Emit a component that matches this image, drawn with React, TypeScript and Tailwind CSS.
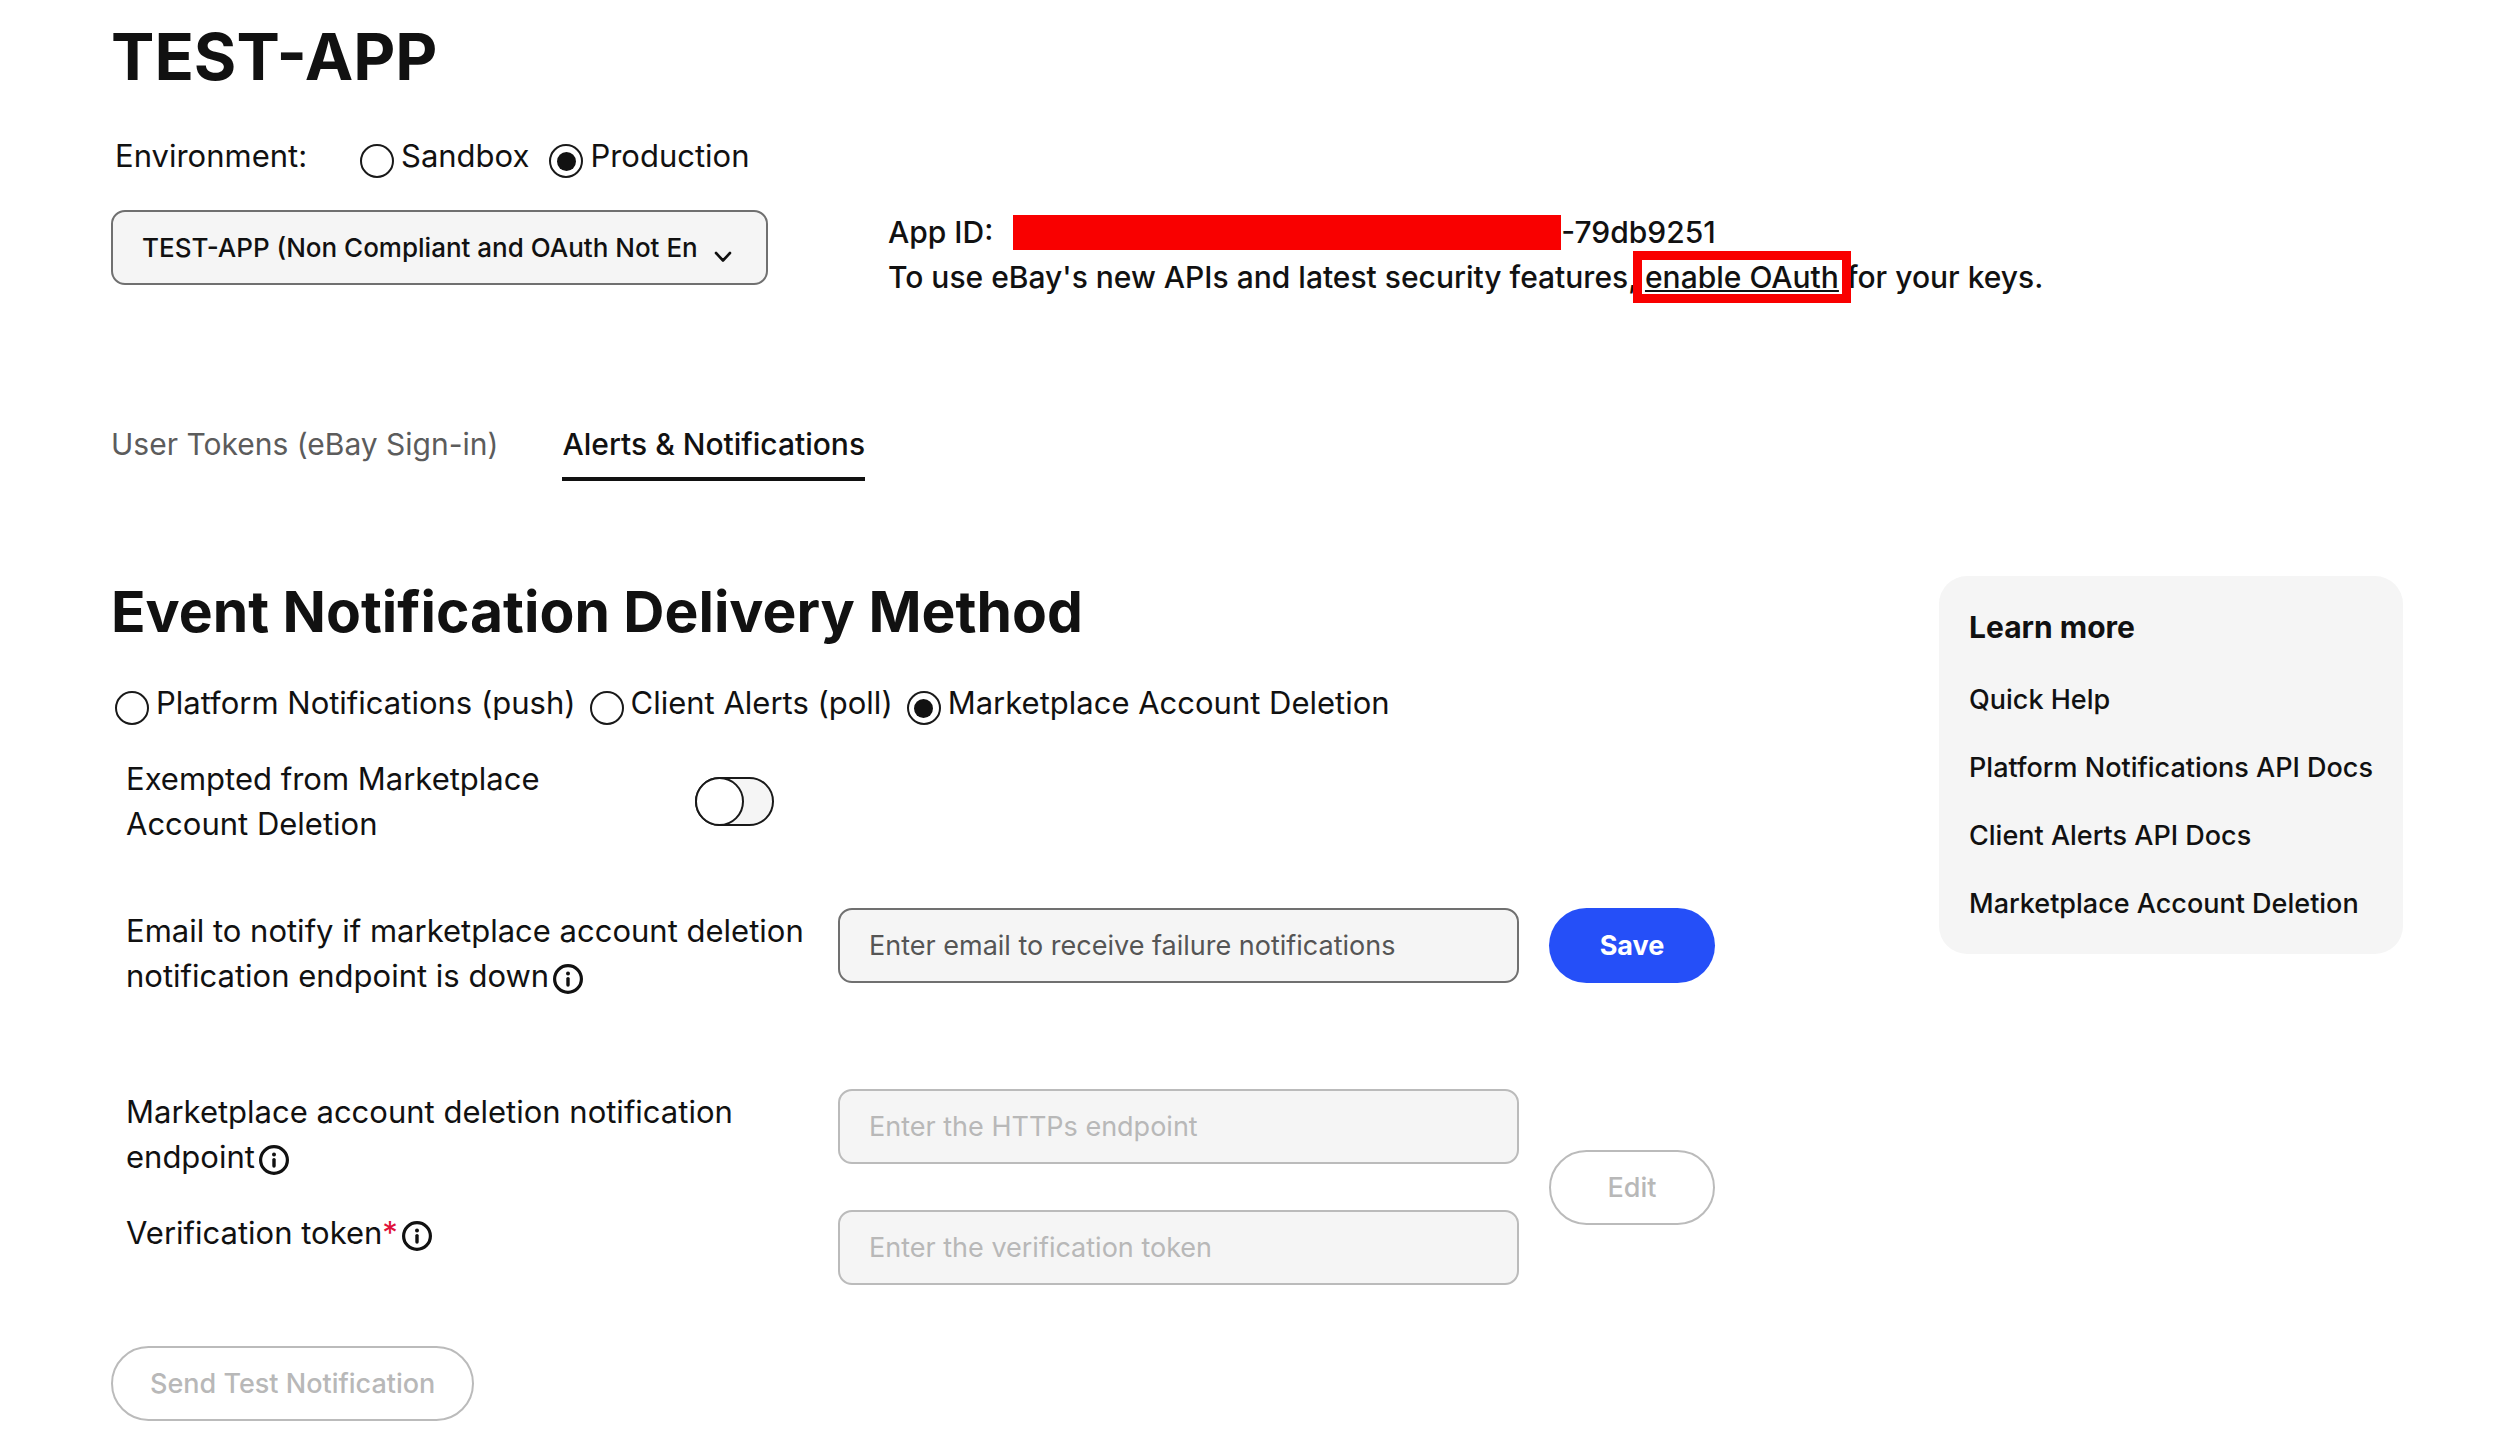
import { useState } from 'react';
import type { ReactNode } from 'react';
import { clsx } from 'clsx';

type Environment = 'sandbox' | 'production';
type DeliveryMethod = 'push' | 'poll' | 'deletion';

const TABS = ['User Tokens (eBay Sign-in)', 'Alerts & Notifications'];

const METHODS: { id: DeliveryMethod; label: string }[] = [
  { id: 'push', label: 'Platform Notifications (push)' },
  { id: 'poll', label: 'Client Alerts (poll)' },
  { id: 'deletion', label: 'Marketplace Account Deletion' },
];

const LINKS = [
  'Quick Help',
  'Platform Notifications API Docs',
  'Client Alerts API Docs',
  'Marketplace Account Deletion',
];

interface RadioProps {
  name: string;
  label: string;
  checked: boolean;
  onChange: () => void;
}

function Radio({ name, label, checked, onChange }: RadioProps) {
  return (
    <label className="flex items-end gap-[7px] whitespace-nowrap">
      <input
        type="radio"
        name={name}
        checked={checked}
        onChange={onChange}
        className="grid size-[34px] shrink-0 appearance-none place-content-center rounded-full border-2 border-[#191919] before:size-[19px] before:rounded-full checked:before:bg-[#111]"
      />
      {label}
    </label>
  );
}

function InfoButton({ label }: { label: string }) {
  return (
    <button type="button" aria-label={label} className="ml-1 inline-block align-middle">
      <svg width="30" height="30" viewBox="0 0 30 30" fill="none">
        <circle cx="15" cy="15" r="13.4" stroke="#111" strokeWidth="3.2" />
        <circle cx="15" cy="9.4" r="2" fill="#111" />
        <path d="M15 14.6v6.400" stroke="#111" strokeWidth="3.4" strokeLinecap="round" />
      </svg>
    </button>
  );
}

interface TextFieldProps {
  id: string;
  type?: string;
  placeholder: string;
  disabled?: boolean;
}

function TextField({ id, type = 'text', placeholder, disabled }: TextFieldProps) {
  return (
    <input
      id={id}
      type={type}
      placeholder={placeholder}
      disabled={disabled}
      className={clsx(
        'h-[75px] w-full min-w-0 rounded-[14px] border-2 bg-[#f5f5f5] px-[29px] text-[27px]',
        disabled
          ? 'border-[#bbb] placeholder:text-[#b8b8b8]'
          : 'border-[#707070] placeholder:text-[#555]'
      )}
    />
  );
}

function FieldLabel({ htmlFor, info, children }: { htmlFor: string; info: string; children: ReactNode }) {
  return (
    <div>
      <label htmlFor={htmlFor}>{children}</label>
      <InfoButton label={info} />
    </div>
  );
}

export default function App() {
  const [environment, setEnvironment] = useState<Environment>('production');
  const [method, setMethod] = useState<DeliveryMethod>('deletion');
  const [tab, setTab] = useState(TABS[1]);
  const [exempted, setExempted] = useState(false);

  return (
    <div className="bg-white pt-[17px] pr-[95px] pb-[10px] pl-[111px] font-['Inter',sans-serif] text-[31px] leading-[45px] text-[#111]">
      <h1 className="text-[65px] leading-[80px] font-bold">TEST-APP</h1>

      {/* Environment */}
      <div className="mt-9 flex items-end gap-5 pl-1">
        <span className="w-[225px]">Environment:</span>
        <Radio
          name="environment"
          label="Sandbox"
          checked={environment === 'sandbox'}
          onChange={() => setEnvironment('sandbox')}
        />
        <Radio
          name="environment"
          label="Production"
          checked={environment === 'production'}
          onChange={() => setEnvironment('production')}
        />
      </div>

      {/* App picker and keys */}
      <div className="mt-8 flex items-start gap-[120px]">
        <div className="relative w-[657px]">
          <select
            aria-label="Application"
            className="h-[75px] w-full appearance-none rounded-[14px] border-2 border-[#707070] bg-[#f5f5f5] pr-[50px] pl-[29px] text-[26px] font-medium"
          >
            <option>TEST-APP (Non Compliant and OAuth Not En</option>
          </select>
          <svg
            className="pointer-events-none absolute top-[41px] right-9"
            width="18"
            height="12"
            viewBox="0 0 18 12"
            fill="none"
          >
            <path d="M2 2l7 7.500 7-7.500" stroke="#111" strokeWidth="2.600" strokeLinecap="round" strokeLinejoin="round" />
          </svg>
        </div>
        <div className="text-[30px] font-medium">
          <div className="flex items-center">
            App ID:
            <span className="ml-5 h-[35px] w-[548px] bg-[#f90000]" />
            -79db9251
          </div>
          <p>
            To use eBay's new APIs and latest security features,{' '}
            <span className="relative">
              <a href="#oauth" className="underline decoration-2 underline-offset-2">
                enable OAuth
              </a>
              <span className="pointer-events-none absolute -inset-x-3 -inset-y-2 border-[9px] border-[#f90000]" />
            </span>{' '}
            for your keys.
          </p>
        </div>
      </div>

      {/* Tabs */}
      <div role="tablist" className="mt-[122px] flex gap-16 text-[30px]">
        {TABS.map(t => (
          <button
            key={t}
            type="button"
            role="tab"
            aria-selected={t === tab}
            onClick={() => setTab(t)}
            className={clsx(
              'border-b-4 pb-[10px]',
              t === tab ? 'border-[#111] font-medium text-[#111]' : 'border-transparent text-[#5c5c5c]'
            )}
          >
            {t}
          </button>
        ))}
      </div>

      <div className="mt-[95px] flex items-start justify-between gap-16">
        <main className="min-w-0">
          <h2 className="text-[57px] leading-[72px] font-bold">Event Notification Delivery Method</h2>

          <div className="mt-8 flex gap-[14px] pl-1">
            {METHODS.map(m => (
              <Radio
                key={m.id}
                name="method"
                label={m.label}
                checked={method === m.id}
                onChange={() => setMethod(m.id)}
              />
            ))}
          </div>

          <div className="pl-[15px]">
            <div className="mt-[31px] flex items-center gap-[120px]">
              <label htmlFor="exempted" className="w-[449px]">
                Exempted from Marketplace Account Deletion
              </label>
              <input
                id="exempted"
                type="checkbox"
                role="switch"
                checked={exempted}
                onChange={e => setExempted(e.target.checked)}
                className="flex h-[49px] w-[79px] appearance-none rounded-full border-2 border-[#191919] bg-[#f5f5f5] before:-m-0.5 before:size-[49px] before:rounded-full before:border-2 before:border-[#191919] before:bg-white checked:justify-end"
              />
            </div>

            <div className="mt-[62px] grid grid-cols-[682px_minmax(0,681px)_166px] gap-x-[30px]">
              <FieldLabel htmlFor="email" info="About failure emails">
                Email to notify if marketplace account deletion notification endpoint is down
              </FieldLabel>
              <TextField id="email" type="email" placeholder="Enter email to receive failure notifications" />
              <button type="button" className="h-[75px] rounded-full bg-[#254ff8] text-[27px] font-bold text-white">
                Save
              </button>
            </div>

            <div className="mt-[91px] grid grid-cols-[682px_minmax(0,681px)_166px] gap-x-[30px] gap-y-[31px]">
              <FieldLabel htmlFor="endpoint" info="About the endpoint">
                Marketplace account deletion notification endpoint
              </FieldLabel>
              <TextField id="endpoint" type="url" placeholder="Enter the HTTPs endpoint" disabled />
              <button
                type="button"
                disabled
                className="row-span-2 h-[75px] self-center rounded-full border-2 border-[#bbb] text-[27px] font-medium text-[#b8b8b8]"
              >
                Edit
              </button>
              <FieldLabel htmlFor="token" info="About the verification token">
                Verification token<span className="text-[#e0103a]">*</span>
              </FieldLabel>
              <TextField id="token" placeholder="Enter the verification token" disabled />
            </div>
          </div>

          <button
            type="button"
            disabled
            className="mt-[61px] h-[75px] rounded-full border-2 border-[#bbb] px-[37px] text-[27px] font-medium text-[#b8b8b8]"
          >
            Send Test Notification
          </button>
        </main>

        <aside className="w-[464px] shrink-0 rounded-[28px] bg-[#f5f5f5] px-[30px] pt-[29px] pb-7">
          <h3 className="text-[30px] font-bold">Learn more</h3>
          <ul className="mt-[27px] flex flex-col gap-[23px] text-[27px] font-medium whitespace-nowrap">
            {LINKS.map(link => (
              <li key={link}>
                <a href="#docs">{link}</a>
              </li>
            ))}
          </ul>
        </aside>
      </div>
    </div>
  );
}
